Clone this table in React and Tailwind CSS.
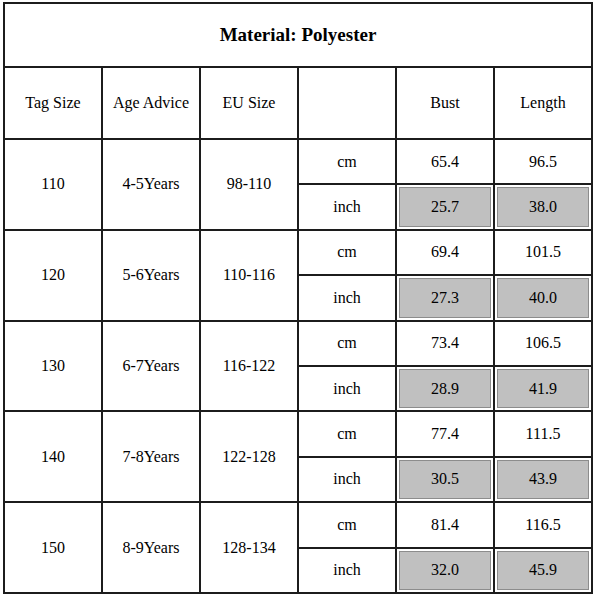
import React from "react";

const rows = [
  { tag: "110", age: "4-5Years", eu: "98-110", cm: ["65.4", "96.5"], inch: ["25.7", "38.0"] },
  { tag: "120", age: "5-6Years", eu: "110-116", cm: ["69.4", "101.5"], inch: ["27.3", "40.0"] },
  { tag: "130", age: "6-7Years", eu: "116-122", cm: ["73.4", "106.5"], inch: ["28.9", "41.9"] },
  { tag: "140", age: "7-8Years", eu: "122-128", cm: ["77.4", "111.5"], inch: ["30.5", "43.9"] },
  { tag: "150", age: "8-9Years", eu: "128-134", cm: ["81.4", "116.5"], inch: ["32.0", "45.9"] },
];

const Cell = ({ children, className = "" }) => (
  <div className={`flex items-center justify-center bg-white ${className}`}>{children}</div>
);

const GrayCell = ({ children }) => (
  <div className="bg-white p-[2px] flex">
    <div className="flex-1 flex items-center justify-center bg-[#c0c0c0] border border-[#8c8c8c]">
      {children}
    </div>
  </div>
);

export default function App() {
  return (
    <div className="w-[600px] h-[600px] bg-white pt-[2px] pl-[3px]">
      <div
        className="w-[590px] h-[592px] grid grid-cols-6 grid-rows-[62px_70px_repeat(10,1fr)] gap-[2px] p-[2px] bg-[#1c1c1c] text-[16px] text-black"
        style={{ fontFamily: '"Liberation Serif", "Times New Roman", serif' }}
      >
        <Cell className="col-span-6 text-[19px] font-bold">Material: Polyester</Cell>
        <Cell>Tag Size</Cell>
        <Cell>Age Advice</Cell>
        <Cell>EU Size</Cell>
        <Cell></Cell>
        <Cell>Bust</Cell>
        <Cell>Length</Cell>
        {rows.map((r) => (
          <React.Fragment key={r.tag}>
            <Cell className="row-span-2">{r.tag}</Cell>
            <Cell className="row-span-2">{r.age}</Cell>
            <Cell className="row-span-2">{r.eu}</Cell>
            <Cell>cm</Cell>
            <Cell>{r.cm[0]}</Cell>
            <Cell>{r.cm[1]}</Cell>
            <Cell>inch</Cell>
            <GrayCell>{r.inch[0]}</GrayCell>
            <GrayCell>{r.inch[1]}</GrayCell>
          </React.Fragment>
        ))}
      </div>
    </div>
  );
}
